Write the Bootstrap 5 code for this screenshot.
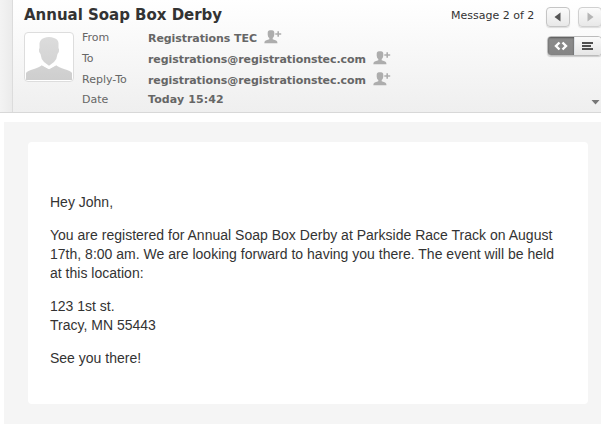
<!DOCTYPE html>
<html lang="en">
<head>
<meta charset="utf-8">
<meta name="viewport" content="width=device-width, initial-scale=1">
<title>Annual Soap Box Derby</title>
<link href="https://cdn.jsdelivr.net/npm/bootstrap@5.3.0/dist/css/bootstrap.min.css" rel="stylesheet">
<style>
body{font-family:"DejaVu Sans",Verdana,sans-serif;font-size:11px;color:#333;overflow:hidden}
.msg-header{height:113px;border-bottom:1px solid #d8d8d8;background:linear-gradient(#fff,#efefef)}
.side-edge{width:13px;border-right:1px solid #dcdcdc;background:linear-gradient(90deg,#f3f3f3,#ebebeb)}
.heading-area{padding:5px 0 0 11px}
.subject{font-size:15px;line-height:20px;font-weight:700;letter-spacing:-.02px;margin:0}
.avatar{width:50px;height:50px;border:1px solid #ddd;border-radius:4px;background:#fff;padding:1px;margin:3px 8px 0 0}
.avatar svg,.person{display:block}
.fields{display:grid;grid-template-columns:66px auto;grid-template-rows:21px 21px 20px 17px;margin:-1px 0 0;color:#666;line-height:20px}
.fields dt{font-weight:400}
.fields dd,.fields dt{margin:0;white-space:nowrap}
.fields dd{font-weight:700;letter-spacing:-.07px}
.fields dd:last-child{letter-spacing:.1px}
.fields dd.d-flex{padding-top:1px}
.person{margin:1px 0 0 7px}
.tools{width:150px;padding-top:7px}
.counter{width:95px;margin-top:-1px;line-height:20px;white-space:nowrap}
.nav-btn{width:24px;height:20px;border:1px solid #c5c5c5;border-radius:4px;background:linear-gradient(#fbfbfb,#e8e8e8);box-shadow:0 1px 1px #ddd}
.nav-btn.dim{border-color:#d0d0d0}
.view-switch{width:55px;height:20px;margin:9px 0 0 96px;border:1px solid #bbb;border-radius:4px;overflow:hidden;box-shadow:0 1px 1px #ccc}
.view-switch button{width:27px;border:0;padding:0;background:linear-gradient(#fafafa,#e6e6e6)}
.view-switch .chosen{background:linear-gradient(#8c8c8c,#858585);box-shadow:inset 0 1px 2px #555}
.more{margin:44px 0 0 140px}
.mail-canvas{margin:9px 0 0 4px;height:302px;background:#f5f5f5;padding:20px 13px 20px 24px}
.mail-body{height:262px;border-radius:4px;background:#fff;padding:51px 22px 0;font:14px/19px "Liberation Sans",Arial,sans-serif;color:#333}
.mail-body p{margin:0 0 14px}
.long-text{letter-spacing:.012px}
</style>
<script src="https://cdn.jsdelivr.net/npm/bootstrap@5.3.0/dist/js/bootstrap.bundle.min.js"></script>
</head>
<body>
<svg width="0" height="0" class="d-none" aria-hidden="true">
<symbol id="add-person" viewBox="0 0 18 14"><path d="M6 .2h2q2.300.1 2.300 2.800v1.800q-.3 2.500-1.600 3.300v1.200l3.400 1.200q1.400.5 1.400 2.700H.3q0-2.200 1.400-2.700l3.600-1.200V8.100Q3.800 7.200 3.700 4.800V3Q3.700.3 6 .2ZM13.400 1.300H15v2h2.200v1.500H15v2h-1.600v-2h-2.100V3.300h2.100Z" fill="#adadad"/></symbol>
</svg>
<header class="msg-header d-flex">
<div class="side-edge flex-shrink-0"></div>
<div class="heading-area flex-grow-1 d-flex flex-column">
<h1 class="subject">Annual Soap Box Derby</h1>
<div class="d-flex mt-1">
<div class="avatar flex-shrink-0">
<svg width="46" height="46" viewBox="0 0 46 46"><defs><linearGradient id="shade" x2="0" y2="1"><stop stop-color="#dcdcdc"/><stop offset="1" stop-color="#cecece"/></linearGradient></defs><path d="M18 4q5-2 10 0 4 1 4.500 5v5q1 1 .3 4l-1.300 2q-.5 5-3.500 8l-4 3q-1 1-2 0l-4-3q-3-3-3.500-8l-1.300-2q-.7-3 .3-4V9q1-4 4.500-5ZM16 31l7 4 7-4q2 2 8 4 7 2 8 4v7H0v-7q1-2 8-4 6-2 8-4Z" fill="url(#shade)"/><path d="m15.500 30.500 7.500 4 7.500-4" fill="none" stroke="#fff" stroke-width="1.200"/></svg>
</div>
<dl class="fields">
<dt>From</dt><dd class="d-flex"><span>Registrations TEC</span><svg class="person" width="18" height="14"><use href="#add-person"/></svg></dd>
<dt>To</dt><dd class="d-flex"><span>registrations@registrationstec.com</span><svg class="person" width="18" height="14"><use href="#add-person"/></svg></dd>
<dt>Reply-To</dt><dd class="d-flex"><span>registrations@registrationstec.com</span><svg class="person" width="18" height="14"><use href="#add-person"/></svg></dd>
<dt>Date</dt><dd>Today 15:42</dd>
</dl>
</div>
</div>
<div class="tools d-flex flex-column flex-shrink-0">
<div class="d-flex">
<span class="counter flex-shrink-0">Message 2 of 2</span>
<button class="nav-btn p-0 d-flex flex-shrink-0 align-items-center justify-content-center me-2" aria-label="Previous message"><svg width="8" height="10"><path d="M.5 5 6.500.5v9Z" fill="#555"/></svg></button>
<button class="nav-btn dim p-0 d-flex flex-shrink-0 align-items-center justify-content-center" aria-label="Next message"><svg width="8" height="10"><path d="M7.500 5 1.500.5v9Z" fill="#b5b5b5"/></svg></button>
</div>
<div class="view-switch d-flex flex-shrink-0">
<button class="chosen" aria-label="HTML view"><svg class="d-block mx-auto" width="14" height="10"><path d="M5.500 1.500 2 5l3.500 3.500m3-7L12 5 8.500 8.500" fill="none" stroke="#fff" stroke-width="2.400"/></svg></button>
<button class="border-start" aria-label="Text view"><svg class="d-block mx-auto" width="12" height="10"><path d="M0 2h11M0 5h9M0 8h11" stroke="#505050" stroke-width="2"/></svg></button>
</div>
<svg class="more" width="9" height="5"><path d="M.5 0h8L4.500 4.500Z" fill="#777"/></svg>
</div>
</header>
<main class="mail-canvas">
<article class="mail-body">
<p>Hey John,</p>
<p class="long-text">You are registered for Annual Soap Box Derby at Parkside Race Track on August 17th, 8:00 am. We are looking forward to having you there. The event will be held at this location:</p>
<p>123 1st st.<br>Tracy, MN 55443</p>
<p>See you there!</p>
</article>
</main>
</body>
</html>
